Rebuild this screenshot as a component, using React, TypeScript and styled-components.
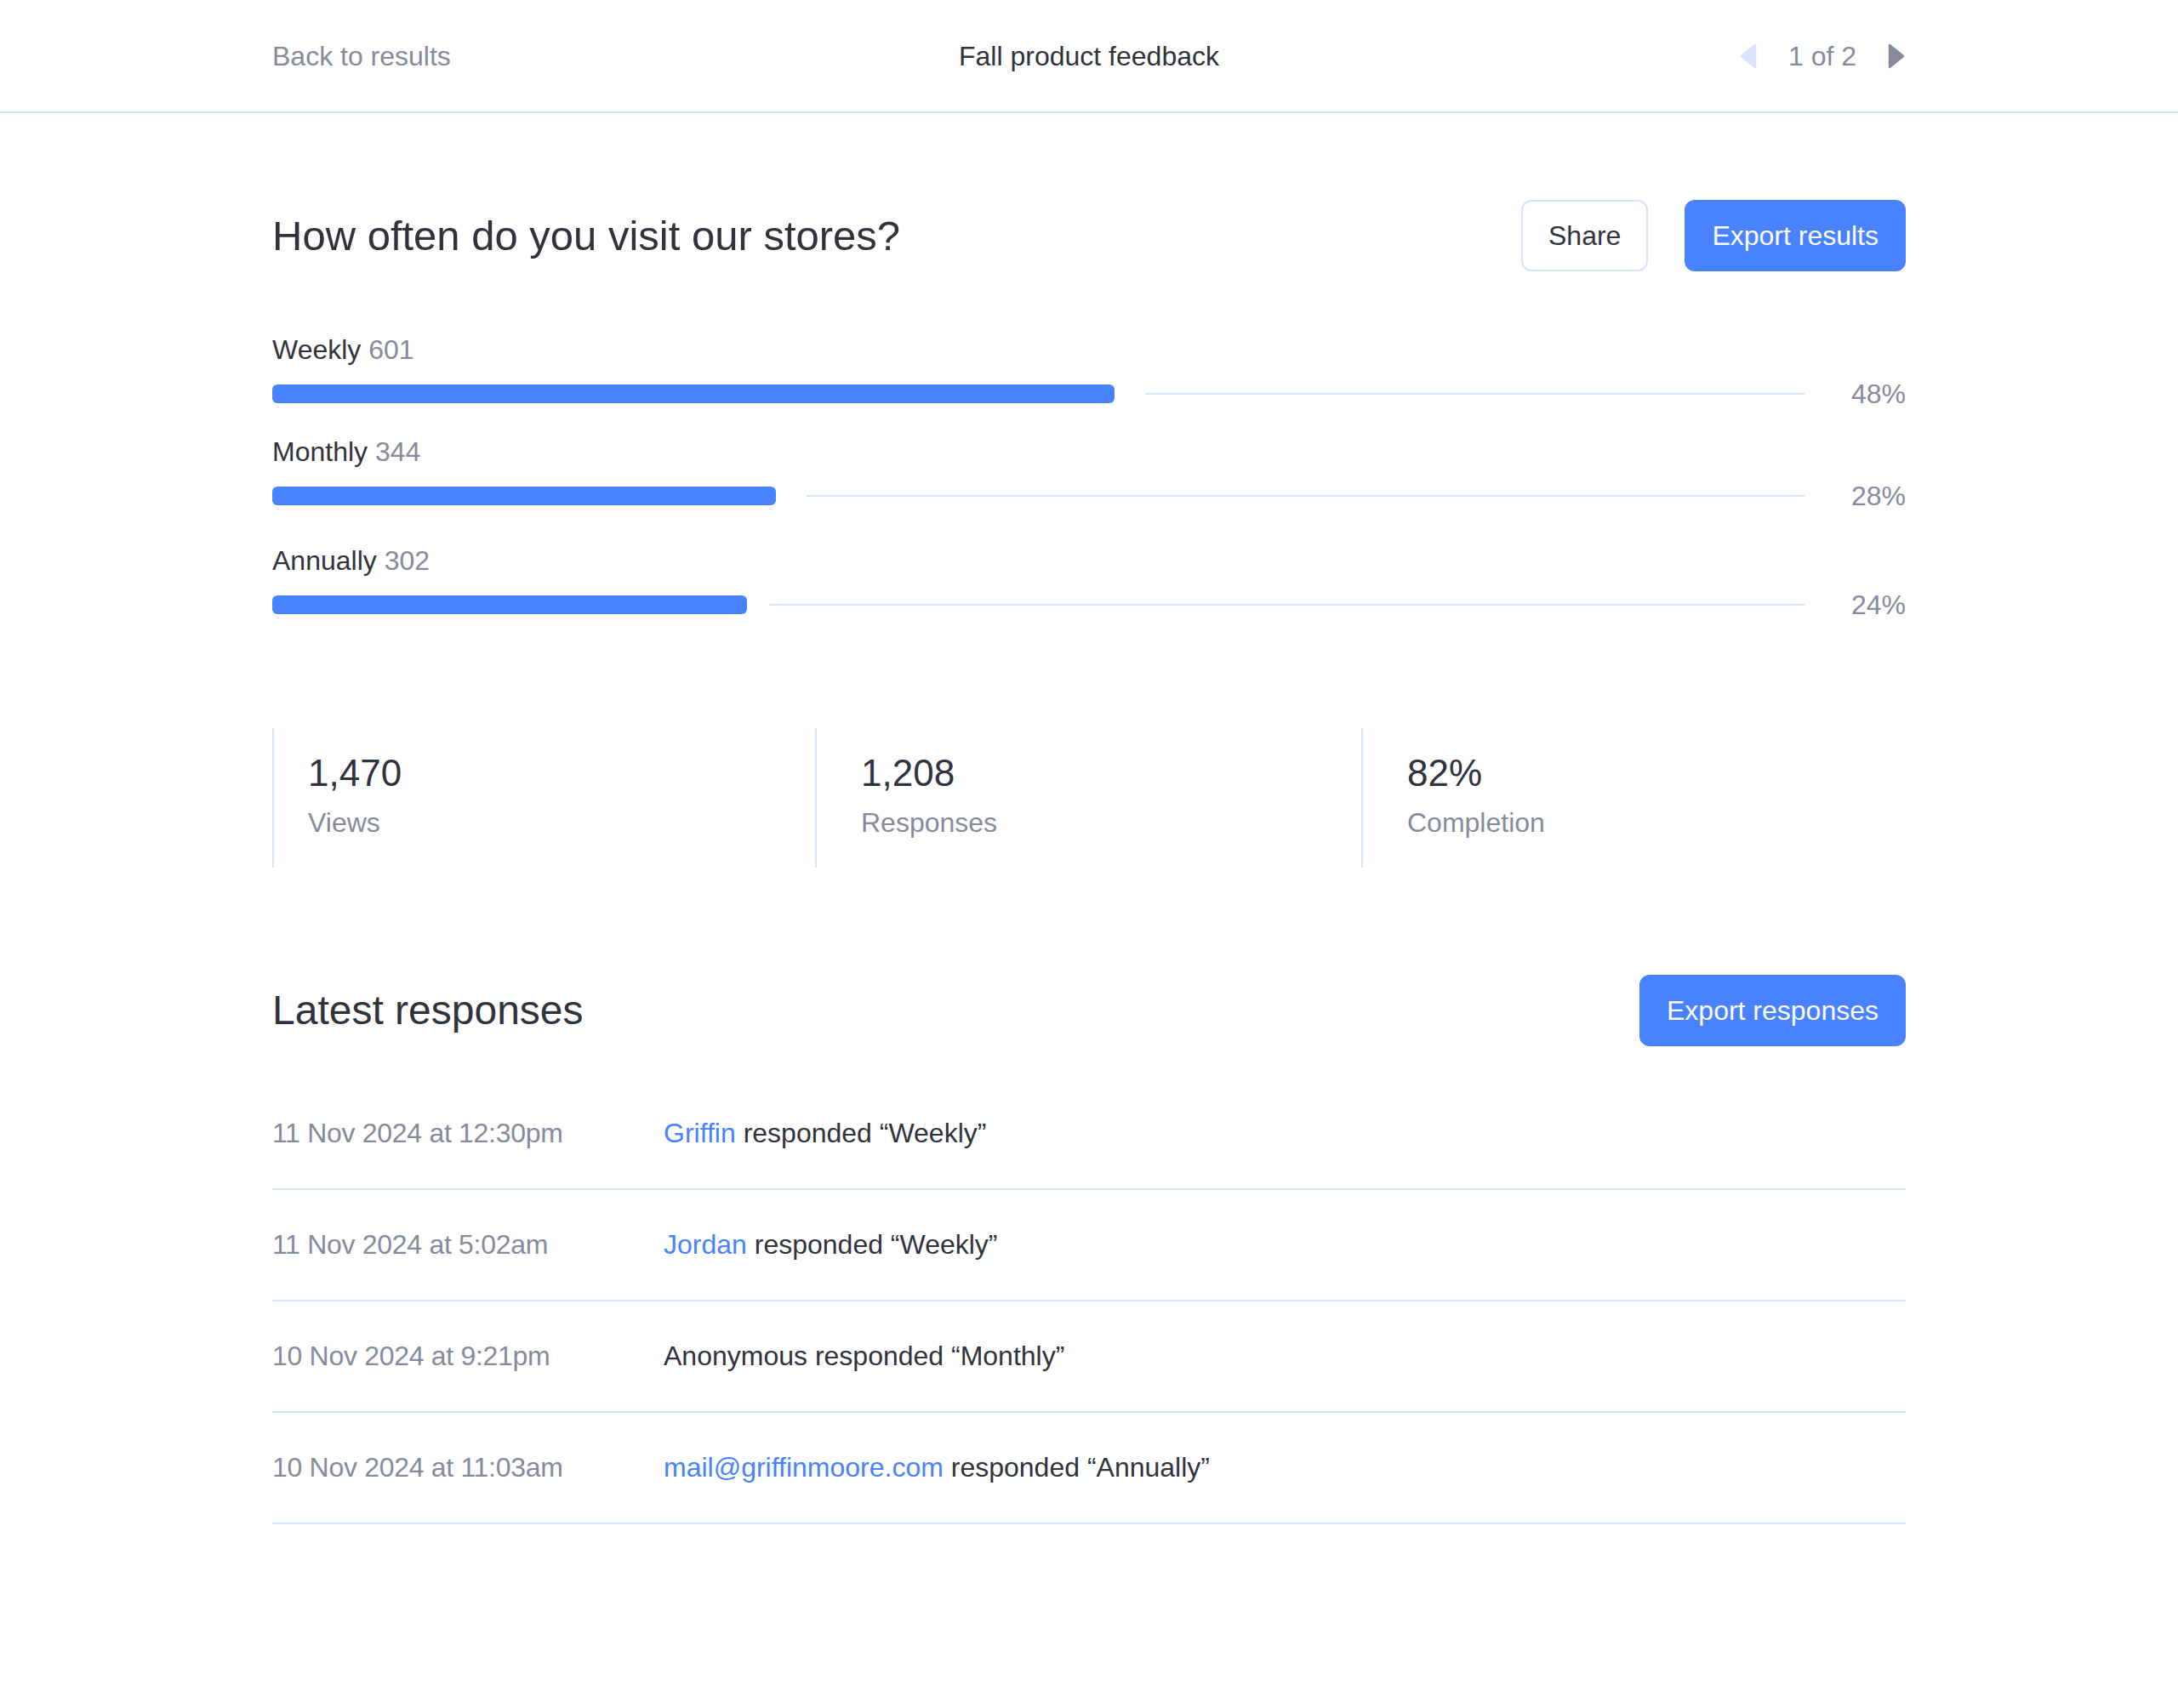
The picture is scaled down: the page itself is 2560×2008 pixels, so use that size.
import React from "react";
import styled, { createGlobalStyle } from "styled-components";

const c = {
  text: "#30333c",
  muted: "#858b9c",
  blue: "#4982ff",
  line: "#d8e3fc",
};

const GlobalStyle = createGlobalStyle`
  html, body { margin: 0; padding: 0; background: #ffffff; }
  body {
    font-family: "Liberation Sans", Arial, sans-serif;
    color: ${c.text};
    -webkit-font-smoothing: antialiased;
  }
  * { box-sizing: border-box; }
`;

const TopBar = styled.header`
  height: 133px;
  border-bottom: 2px solid ${c.line};
`;

const TopInner = styled.div`
  width: 1920px;
  height: 100%;
  margin: 0 auto;
  display: grid;
  grid-template-columns: 1fr auto 1fr;
  align-items: center;
  font-size: 32px;
  line-height: 40px;
`;

const BackLink = styled.a`
  color: ${c.muted};
  text-decoration: none;
  justify-self: start;
`;

const SurveyName = styled.div`
  color: ${c.text};
`;

const Pager = styled.div`
  justify-self: end;
  display: flex;
  align-items: center;
  gap: 36px;
  color: ${c.muted};
`;

const PagerArrow = styled.svg<{ $disabled?: boolean }>`
  width: 22px;
  height: 32px;
  display: block;
  fill: ${(p) => (p.$disabled ? c.line : c.muted)};
  stroke: ${(p) => (p.$disabled ? c.line : c.muted)};
  stroke-width: 2.5;
  stroke-linejoin: round;
`;

const Main = styled.main`
  width: 1920px;
  margin: 0 auto;
  padding: 102px 0 200px;
`;

const SectionHead = styled.div`
  display: flex;
  align-items: center;
  justify-content: space-between;
  height: 84px;
`;

const Heading = styled.h1<{ $size: number }>`
  margin: 0;
  font-size: ${(p) => p.$size}px;
  line-height: 60px;
  font-weight: 400;
  color: ${c.text};
`;

const ButtonGroup = styled.div`
  display: flex;
  gap: 43px;
`;

const Button = styled.button<{ $primary?: boolean }>`
  height: 84px;
  padding: 0 30px;
  border-radius: 12px;
  font-family: inherit;
  font-size: 32px;
  line-height: 40px;
  cursor: pointer;
  border: 2px solid ${(p) => (p.$primary ? c.blue : c.line)};
  background: ${(p) => (p.$primary ? c.blue : "#fff")};
  color: ${(p) => (p.$primary ? "#fff" : c.text)};
`;

const Results = styled.div`
  margin-top: 72px;
  display: flex;
  flex-direction: column;
`;

const ResultItem = styled.div<{ $spaceAfter: number }>`
  display: flex;
  flex-direction: column;
  margin-bottom: ${(p) => p.$spaceAfter}px;
`;

const ResultLabel = styled.div`
  font-size: 32px;
  line-height: 40px;
  color: ${c.text};
`;

const Count = styled.span`
  color: ${c.muted};
`;

const BarRow = styled.div`
  margin-top: 12px;
  height: 40px;
  display: flex;
  align-items: center;
`;

const Bar = styled.div`
  height: 22px;
  border-radius: 6px;
  background: ${c.blue};
  flex: none;
`;

const Track = styled.div<{ $gap: number }>`
  flex: 1;
  height: 2px;
  margin-left: ${(p) => p.$gap}px;
  background: ${c.line};
`;

const Percent = styled.div`
  width: 119px;
  text-align: right;
  font-size: 32px;
  line-height: 40px;
  color: ${c.muted};
`;

const Stats = styled.div`
  margin-top: 125px;
  display: grid;
  grid-template-columns: 638px 642px 640px;
`;

const Stat = styled.div`
  height: 164px;
  border-left: 2px solid ${c.line};
  padding: 25px 0 0 52px;
  &:first-child {
    padding-left: 40px;
  }
`;

const StatValue = styled.div`
  font-size: 44px;
  line-height: 56px;
  color: ${c.text};
`;

const StatLabel = styled.div`
  margin-top: 10px;
  font-size: 32px;
  line-height: 40px;
  color: ${c.muted};
`;

const ResponsesSection = styled.section`
  margin-top: 126px;
`;

const ResponseList = styled.ul`
  list-style: none;
  margin: 38px 0 0;
  padding: 0;
`;

const ResponseRow = styled.li`
  display: grid;
  grid-template-columns: 460px 1fr;
  padding: 44px 0 45px;
  border-bottom: 2px solid ${c.line};
  font-size: 32px;
  line-height: 40px;
`;

const When = styled.span`
  color: ${c.muted};
  letter-spacing: -0.3px;
`;

const What = styled.span`
  color: ${c.text};
`;

const Person = styled.a`
  color: ${c.blue};
  text-decoration: none;
`;

const results = [
  { label: "Weekly", count: 601, pct: "48%", width: 990, gap: 36, after: 28 },
  { label: "Monthly", count: 344, pct: "28%", width: 592, gap: 36, after: 36 },
  { label: "Annually", count: 302, pct: "24%", width: 558, gap: 26, after: 0 },
];

const stats = [
  { value: "1,470", label: "Views" },
  { value: "1,208", label: "Responses" },
  { value: "82%", label: "Completion" },
];

const responses: { when: string; who: string; link: boolean; answer: string }[] = [
  { when: "11 Nov 2024 at 12:30pm", who: "Griffin", link: true, answer: "Weekly" },
  { when: "11 Nov 2024 at 5:02am", who: "Jordan", link: true, answer: "Weekly" },
  { when: "10 Nov 2024 at 9:21pm", who: "Anonymous", link: false, answer: "Monthly" },
  { when: "10 Nov 2024 at 11:03am", who: "mail@griffinmoore.com", link: true, answer: "Annually" },
];

export default function App() {
  return (
    <>
      <GlobalStyle />
      <TopBar>
        <TopInner>
          <BackLink href="#">Back to results</BackLink>
          <SurveyName>Fall product feedback</SurveyName>
          <Pager>
            <PagerArrow $disabled viewBox="0 0 22 32">
              <path d="M19 3 L19 29 L3 16 Z" />
            </PagerArrow>
            <span>1 of 2</span>
            <PagerArrow viewBox="0 0 22 32">
              <path d="M3 3 L3 29 L19 16 Z" />
            </PagerArrow>
          </Pager>
        </TopInner>
      </TopBar>
      <Main>
        <SectionHead>
          <Heading $size={49}>How often do you visit our stores?</Heading>
          <ButtonGroup>
            <Button>Share</Button>
            <Button $primary>Export results</Button>
          </ButtonGroup>
        </SectionHead>
        <Results>
          {results.map((r) => (
            <ResultItem key={r.label} $spaceAfter={r.after}>
              <ResultLabel>
                {r.label} <Count>{r.count}</Count>
              </ResultLabel>
              <BarRow>
                <Bar style={{ width: r.width }} />
                <Track $gap={r.gap} />
                <Percent>{r.pct}</Percent>
              </BarRow>
            </ResultItem>
          ))}
        </Results>
        <Stats>
          {stats.map((s) => (
            <Stat key={s.label}>
              <StatValue>{s.value}</StatValue>
              <StatLabel>{s.label}</StatLabel>
            </Stat>
          ))}
        </Stats>
        <ResponsesSection>
          <SectionHead>
            <Heading as="h2" $size={48}>Latest responses</Heading>
            <Button $primary>Export responses</Button>
          </SectionHead>
          <ResponseList>
            {responses.map((r) => (
              <ResponseRow key={r.when}>
                <When>{r.when}</When>
                <What>
                  {r.link ? <Person href="#">{r.who}</Person> : r.who} responded “{r.answer}”
                </What>
              </ResponseRow>
            ))}
          </ResponseList>
        </ResponsesSection>
      </Main>
    </>
  );
}
